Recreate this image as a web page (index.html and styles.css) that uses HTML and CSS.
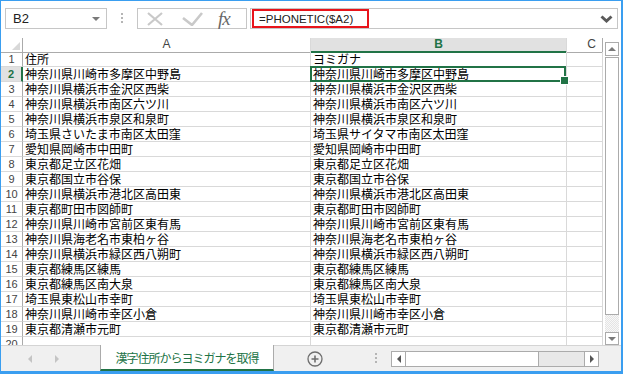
FILE: index.html
```html
<!DOCTYPE html>
<html>
<head>
    <meta charset="utf-8">
    <title>PHONETIC</title>
    <link rel="stylesheet" href="styles.css">
</head>
<body>
<div class="window">
    <!-- formula bar -->
    <div class="formulabar">
        <div class="namebox"><span>B2</span><i class="caret"></i></div>
        <div class="grip"></div>
        <div class="fxbox">
            <svg class="ic-x" width="16" height="14" viewBox="0 0 16 14"><path d="M1 1L15 13M15 1L1 13" stroke="#c9c9c9" stroke-width="2.2" fill="none"/></svg>
            <svg class="ic-ok" width="21" height="14" viewBox="0 0 21 14"><path d="M1 6L10 13L20 1" stroke="#c9c9c9" stroke-width="2.6" fill="none"/></svg>
            <span class="fx">fx</span>
        </div>
        <div class="formula">
            <div class="redbox">=PHONETIC($A2)</div>
            <svg width="13" height="8" viewBox="0 0 13 8"><path d="M1.5 1.5L6.5 6L11.5 1.5" stroke="#5a5a5a" stroke-width="3" fill="none"/></svg>
        </div>
    </div>

    <div class="main">
        <div class="sheet">
            <div class="row head">
                <div class="corner"><svg width="8" height="8" viewBox="0 0 8 8"><polygon points="8,0 8,8 0,8" fill="#d8d8d8"/></svg></div>
                <div class="ch">A</div>
                <div class="ch ch-sel">B</div>
                <div class="ch ch-c">C</div>
            </div>
            <div class="row"><div class="rh">1</div><div class="cell">住所</div><div class="cell">ヨミガナ</div><div class="cell"></div></div>
            <div class="row"><div class="rh rh-sel">2</div><div class="cell">神奈川県川崎市多摩区中野島</div><div class="cell active">神奈川県川崎市多摩区中野島</div><div class="cell"></div></div>
            <div class="row"><div class="rh">3</div><div class="cell">神奈川県横浜市金沢区西柴</div><div class="cell">神奈川県横浜市金沢区西柴</div><div class="cell"></div></div>
            <div class="row"><div class="rh">4</div><div class="cell">神奈川県横浜市南区六ツ川</div><div class="cell">神奈川県横浜市南区六ツ川</div><div class="cell"></div></div>
            <div class="row"><div class="rh">5</div><div class="cell">神奈川県横浜市泉区和泉町</div><div class="cell">神奈川県横浜市泉区和泉町</div><div class="cell"></div></div>
            <div class="row"><div class="rh">6</div><div class="cell">埼玉県さいたま市南区太田窪</div><div class="cell">埼玉県サイタマ市南区太田窪</div><div class="cell"></div></div>
            <div class="row"><div class="rh">7</div><div class="cell">愛知県岡崎市中田町</div><div class="cell">愛知県岡崎市中田町</div><div class="cell"></div></div>
            <div class="row"><div class="rh">8</div><div class="cell">東京都足立区花畑</div><div class="cell">東京都足立区花畑</div><div class="cell"></div></div>
            <div class="row"><div class="rh">9</div><div class="cell">東京都国立市谷保</div><div class="cell">東京都国立市谷保</div><div class="cell"></div></div>
            <div class="row"><div class="rh">10</div><div class="cell">神奈川県横浜市港北区高田東</div><div class="cell">神奈川県横浜市港北区高田東</div><div class="cell"></div></div>
            <div class="row"><div class="rh">11</div><div class="cell">東京都町田市図師町</div><div class="cell">東京都町田市図師町</div><div class="cell"></div></div>
            <div class="row"><div class="rh">12</div><div class="cell">神奈川県川崎市宮前区東有馬</div><div class="cell">神奈川県川崎市宮前区東有馬</div><div class="cell"></div></div>
            <div class="row"><div class="rh">13</div><div class="cell">神奈川県海老名市東柏ヶ谷</div><div class="cell">神奈川県海老名市東柏ヶ谷</div><div class="cell"></div></div>
            <div class="row"><div class="rh">14</div><div class="cell">神奈川県横浜市緑区西八朔町</div><div class="cell">神奈川県横浜市緑区西八朔町</div><div class="cell"></div></div>
            <div class="row"><div class="rh">15</div><div class="cell">東京都練馬区練馬</div><div class="cell">東京都練馬区練馬</div><div class="cell"></div></div>
            <div class="row"><div class="rh">16</div><div class="cell">東京都練馬区南大泉</div><div class="cell">東京都練馬区南大泉</div><div class="cell"></div></div>
            <div class="row"><div class="rh">17</div><div class="cell">埼玉県東松山市幸町</div><div class="cell">埼玉県東松山市幸町</div><div class="cell"></div></div>
            <div class="row"><div class="rh">18</div><div class="cell">神奈川県川崎市幸区小倉</div><div class="cell">神奈川県川崎市幸区小倉</div><div class="cell"></div></div>
            <div class="row"><div class="rh">19</div><div class="cell">東京都清瀬市元町</div><div class="cell">東京都清瀬市元町</div><div class="cell"></div></div>
            <div class="row"><div class="rh">20</div><div class="cell"></div><div class="cell"></div><div class="cell"></div></div>
        </div>

        <div class="vscroll">
            <div class="vbtn"><i class="tri-up"></i></div>
            <div class="vthumb"></div>
            <div class="vtrack"></div>
            <div class="vbtn vbtn-down"><i class="tri-down"></i></div>
        </div>
    </div>

    <!-- sheet tabs -->
    <div class="tabbar">
        <div class="tabnav"><i class="tri-left light"></i><i class="tri-right light"></i></div>
        <div class="tab">漢字住所からヨミガナを取得</div>
        <div class="tabrest">
            <svg class="plus" width="16" height="16" viewBox="0 0 16 16"><circle cx="8" cy="8" r="7" stroke="#6e6e6e" stroke-width="1.3" fill="none"/><path d="M8 4.5V11.5M4.5 8H11.5" stroke="#6e6e6e" stroke-width="1.6"/></svg>
            <div class="grip grip-tab"></div>
            <div class="hscroll">
                <div class="hbtn"><i class="tri-left"></i></div>
                <div class="hthumb"></div>
                <div class="htrack"></div>
                <div class="hbtn hbtn-right"><i class="tri-right"></i></div>
            </div>
        </div>
    </div>
</div>
</body>
</html>
```

FILE: styles.css
```css
* {
  box-sizing: border-box;
}

body {
  margin: 0;
  font-family: "Noto Sans CJK JP", sans-serif;
}

.window {
  width: 623px;
  height: 374px;
  border: solid #3a9ef0;
  border-width: 1px 2px 3px 1px;
  display: flex;
  flex-direction: column;
  background: #fff;
  overflow: hidden;
}

/* formula bar */
.formulabar {
  flex: none;
  height: 37px;
  display: flex;
  align-items: flex-start;
  padding: 7px 0 0 4px;
}

.namebox {
  width: 102px;
  height: 21px;
  border: 1px solid #c6c6c6;
  display: flex;
  align-items: center;
  justify-content: space-between;
  padding: 0 6px 0 7px;
  font: 13px "Liberation Sans", sans-serif;
  color: #222;
}

.caret {
  border-top: 4px solid #7a7a7a;
  border-left: 4px solid transparent;
  border-right: 4px solid transparent;
}

.grip {
  width: 2px;
  height: 11px;
  margin: 5px 14px 0 14px;
  background: repeating-linear-gradient(#b5b5b5 0 2px, transparent 2px 4px);
}

.fxbox {
  width: 110px;
  height: 21px;
  border: 1px solid #c6c6c6;
  display: flex;
  align-items: center;
  padding-left: 9px;
}

.ic-ok {
  margin-left: 19px;
}

.fx {
  margin-left: 15px;
  font: italic 19px "Liberation Serif", serif;
  color: #686868;
  letter-spacing: -1px;
  line-height: 19px;
}

.formula {
  margin-left: 3px;
  width: 368px;
  height: 21px;
  border: 1px solid #c6c6c6;
  display: flex;
  align-items: center;
  justify-content: space-between;
  padding: 0 4px 0 1px;
}

.redbox {
  width: 117px;
  height: 19px;
  border: 2px solid #e8141b;
  padding-left: 5px;
  display: flex;
  align-items: center;
  font: 11.5px "Liberation Sans", sans-serif;
  color: #222;
}

/* grid */
.main {
  flex: none;
  height: 307px;
  display: flex;
}

.sheet {
  width: 602px;
  overflow: hidden;
}

.row {
  display: grid;
  grid-template-columns: 22px 288px 256px 36px;
  height: 15px;
}

.row > div {
  border-right: 1px solid #d9d9d9;
  border-bottom: 1px solid #d9d9d9;
}

.head {
  height: 14px;
}

.head > div {
  border-bottom-color: #ababab;
  font: 12px "Liberation Sans", sans-serif;
  color: #444;
  text-align: center;
  line-height: 13px;
}

.corner {
  display: flex;
  justify-content: flex-end;
  align-items: flex-end;
  padding: 0 2px 2px 0;
}

.row > .corner,
.row > .rh {
  border-right-color: #ababab;
}

.head > .ch-sel {
  background: #e1e1e1;
  color: #217346;
  font-weight: bold;
  border-bottom: 2px solid #217346;
}

.head > .ch-c {
  text-align: right;
  padding-right: 6px;
  border-right-color: #ababab;
}

.rh {
  font: 11px "Liberation Sans", sans-serif;
  color: #444;
  text-align: center;
  line-height: 14px;
}

.row > .rh-sel {
  background: #e1e1e1;
  color: #217346;
  font-weight: bold;
  border-right: 2px solid #217346;
}

.cell {
  font-size: 12px;
  line-height: 14px;
  color: #000;
  padding-left: 2px;
  white-space: nowrap;
  overflow: hidden;
}

.cell.active {
  position: relative;
  overflow: visible;
}

.cell.active::after {
  content: "";
  position: absolute;
  left: -1px;
  top: -1px;
  right: 0;
  bottom: -1px;
  border: 2px solid #217346;
}

.cell.active::before {
  content: "";
  position: absolute;
  right: -3px;
  bottom: -4px;
  width: 7px;
  height: 7px;
  background: #217346;
  border: 1px solid #fff;
  z-index: 2;
}

/* vertical scrollbar */
.vscroll {
  width: 18px;
  padding: 4px 2px 0 2px;
  display: flex;
  flex-direction: column;
}

.vbtn {
  height: 14px;
  border: 1px solid #ababab;
  background: #fff;
  display: flex;
  align-items: center;
  justify-content: center;
}

.vbtn-down {
  height: 13px;
}

.vthumb {
  flex: 1;
  margin-top: 1px;
  border: 1px solid #ababab;
  background: #fff;
}

.vtrack {
  height: 17px;
  background: repeating-conic-gradient(#e4e4e4 0 25%, #f8f8f8 0 50%) 0 0 / 2px 2px;
}

.tri-up {
  border-bottom: 4px solid #7a7a7a;
  border-left: 4px solid transparent;
  border-right: 4px solid transparent;
}

.tri-down {
  border-top: 4px solid #7a7a7a;
  border-left: 4px solid transparent;
  border-right: 4px solid transparent;
}

.tri-left {
  border-right: 4px solid #555;
  border-top: 4px solid transparent;
  border-bottom: 4px solid transparent;
}

.tri-right {
  border-left: 4px solid #555;
  border-top: 4px solid transparent;
  border-bottom: 4px solid transparent;
}

.tri-left.light {
  border-right-color: #c4c4c4;
}

.tri-right.light {
  border-left-color: #c4c4c4;
}

/* sheet tabs */
.tabbar {
  flex: none;
  height: 26px;
  display: flex;
  background: #f0f0f0;
}

.tabnav {
  width: 99px;
  border-top: 1px solid #d4d4d4;
  display: flex;
  align-items: center;
  gap: 23px;
  padding-left: 27px;
}

.tab {
  width: 174px;
  background: #fff;
  border-left: 1px solid #ababab;
  border-right: 1px solid #ababab;
  border-bottom: 2px solid #217346;
  color: #217346;
  font-size: 12px;
  letter-spacing: -1px;
  display: flex;
  align-items: center;
  justify-content: center;
}

.tabrest {
  flex: 1;
  border-top: 1px solid #d4d4d4;
  display: flex;
  align-items: center;
}

.plus {
  margin-left: 33px;
}

.grip-tab {
  margin: 0 14px 0 52px;
}

.hscroll {
  width: 208px;
  height: 16px;
  border: 1px solid #ababab;
  display: flex;
  background: #e8e8e8;
}

.hbtn {
  width: 14px;
  background: #fff;
  border-right: 1px solid #ababab;
  display: flex;
  align-items: center;
  justify-content: center;
}

.hbtn-right {
  border-right: none;
  border-left: 1px solid #ababab;
}

.hthumb {
  width: 133px;
  background: #fff;
  border-right: 1px solid #ababab;
}

.htrack {
  flex: 1;
}
```
